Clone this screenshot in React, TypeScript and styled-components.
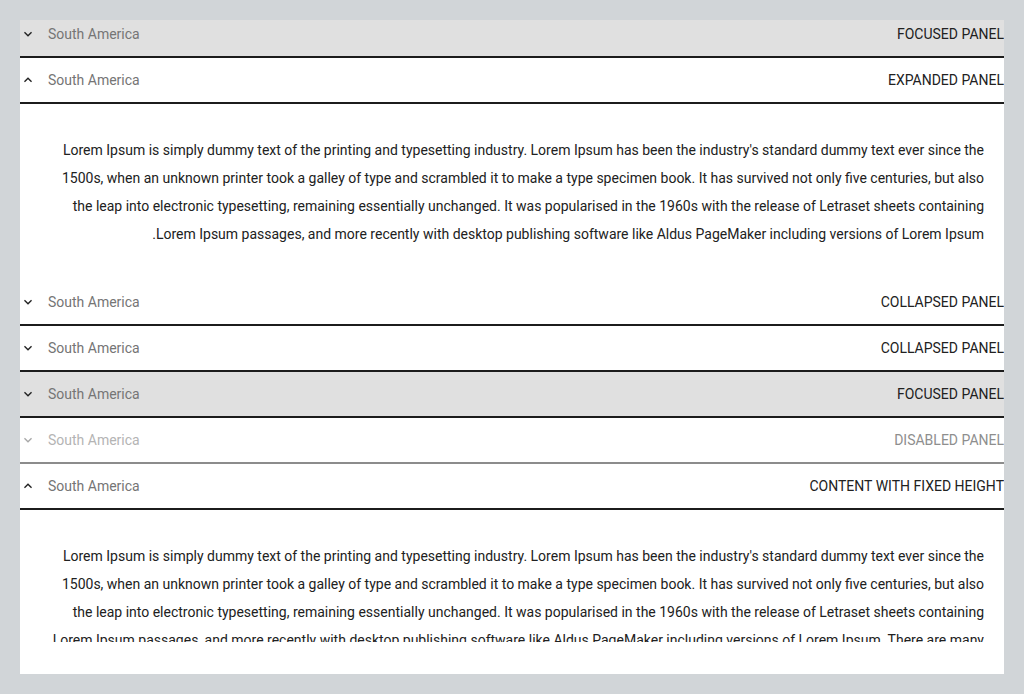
import React from "react";
import styled, { createGlobalStyle } from "styled-components";

const Global = createGlobalStyle`
  html, body { margin: 0; padding: 0; background: #d1d5d8; }
  body { font-family: Roboto, "Liberation Sans", Arial, sans-serif; }
`;

const Page = styled.div`
  padding: 20px;
  height: 694px;
  box-sizing: border-box;
`;

const Panel = styled.div`
  direction: rtl;
  background: #ffffff;
  overflow: hidden;
  height: 654px;
  display: flex;
  flex-direction: column;
`;

const Header = styled.div<{ $focused?: boolean; $disabled?: boolean; $trim?: boolean }>`
  flex: none;
  display: flex;
  align-items: center;
  height: 44px;
  margin-top: ${(p) => (p.$trim ? "-8px" : "0")};
  background: ${(p) => (p.$focused ? "#e0e0e0" : "#ffffff")};
  border-bottom: 2px solid ${(p) => (p.$disabled ? "#8c8c8c" : "#1c1c1c")};
  font-size: 14px;
`;

const Title = styled.span<{ $disabled?: boolean }>`
  text-transform: uppercase;
  color: ${(p) => (p.$disabled ? "#8e8e8e" : "#212121")};
  white-space: nowrap;
`;

const Description = styled.span<{ $disabled?: boolean }>`
  margin-inline-start: auto;
  margin-inline-end: 12px;
  color: ${(p) => (p.$disabled ? "#b4b4b4" : "#757575")};
  white-space: nowrap;
`;

const IconBox = styled.span<{ $disabled?: boolean }>`
  width: 16px;
  height: 16px;
  display: flex;
  align-items: center;
  justify-content: center;
  color: ${(p) => (p.$disabled ? "#a8a8a8" : "#212121")};
`;

const Content = styled.div`
  flex: none;
  padding: 32px 20px;
  font-size: 14px;
  line-height: 28px;
  color: #212121;
  text-align: start;
`;

const FixedBody = styled.div`
  height: 100px;
  overflow: hidden;
`;

const Chevron = ({ up }: { up?: boolean }) => (
  <svg width="16" height="16" viewBox="0 0 24 24" fill="currentColor">
    {up ? (
      <path d="M12 8l-6 6 1.41 1.41L12 10.83l4.59 4.58L18 14z" />
    ) : (
      <path d="M16.59 8.59L12 13.17 7.41 8.59 6 10l6 6 6-6z" />
    )}
  </svg>
);

const LOREM =
  "Lorem Ipsum is simply dummy text of the printing and typesetting industry. Lorem Ipsum has been the industry's standard dummy text ever since the 1500s, when an unknown printer took a galley of type and scrambled it to make a type specimen book. It has survived not only five centuries, but also the leap into electronic typesetting, remaining essentially unchanged. It was popularised in the 1960s with the release of Letraset sheets containing Lorem Ipsum passages, and more recently with desktop publishing software like Aldus PageMaker including versions of Lorem Ipsum.";

const MORE =
  " There are many variations of passages of Lorem Ipsum available, but the majority have suffered alteration in some form, by injected humour, or randomised words which don't look even slightly believable.";

type RowProps = {
  title: string;
  focused?: boolean;
  disabled?: boolean;
  expanded?: boolean;
  trim?: boolean;
};

const Row = ({ title, focused, disabled, expanded, trim }: RowProps) => (
  <Header $focused={focused} $disabled={disabled} $trim={trim}>
    <Title $disabled={disabled}>{title}</Title>
    <Description $disabled={disabled}>South America</Description>
    <IconBox $disabled={disabled}>
      <Chevron up={expanded} />
    </IconBox>
  </Header>
);

export default function App() {
  return (
    <>
      <Global />
      <Page>
        <Panel>
          <Row title="Focused panel" focused trim />
          <Row title="Expanded panel" expanded />
          <Content>{LOREM}</Content>
          <Row title="Collapsed panel" />
          <Row title="Collapsed panel" />
          <Row title="Focused panel" focused />
          <Row title="Disabled panel" disabled />
          <Row title="Content with fixed height" expanded />
          <Content>
            <FixedBody>{LOREM + MORE}</FixedBody>
          </Content>
        </Panel>
      </Page>
    </>
  );
}
